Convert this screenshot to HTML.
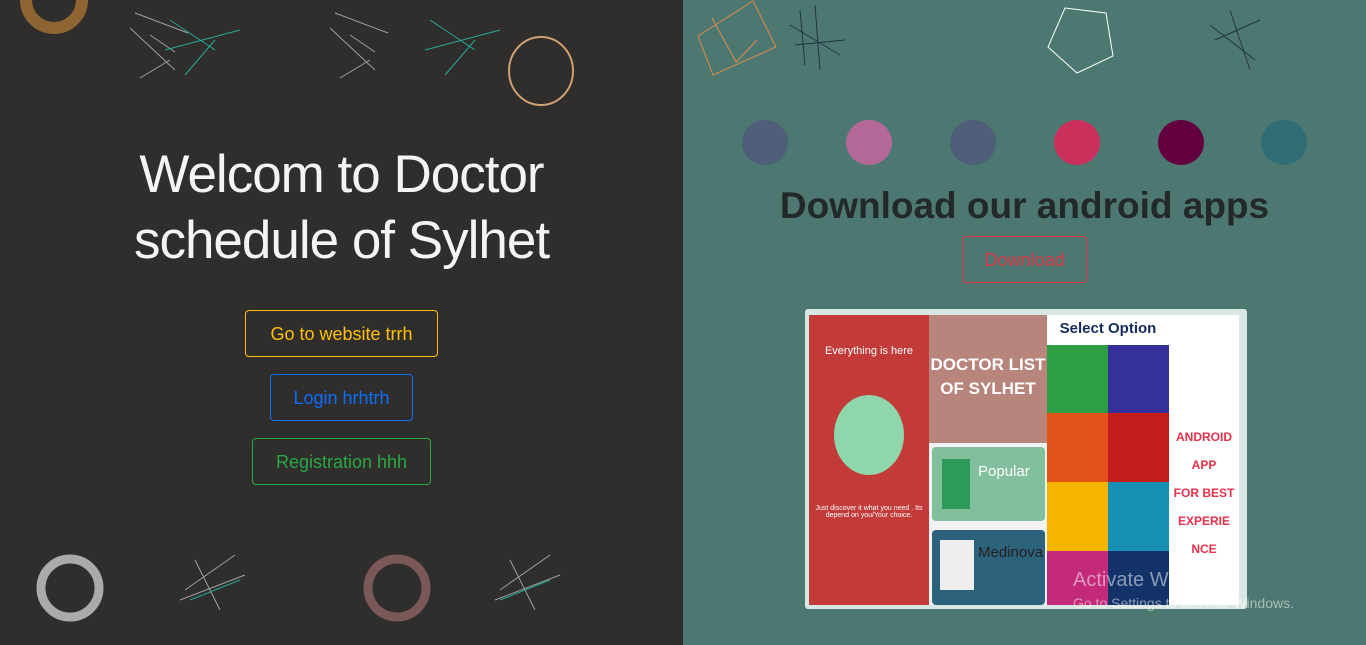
<!DOCTYPE html>
<html><head><meta charset="utf-8"><style>
*{margin:0;padding:0;box-sizing:border-box}
body{width:1366px;height:645px;overflow:hidden;font-family:"Liberation Sans",sans-serif;position:relative}
.l{position:absolute;left:0;top:0;width:683px;height:645px;background:#302d2d}
.r{position:absolute;left:683px;top:0;width:683px;height:645px;background:#4d7871}
.abs{position:absolute}
h1{position:absolute;left:0;width:683px;top:142px;text-align:center;color:#f4f4f4;font-weight:normal;font-size:53px;line-height:66px;letter-spacing:-1px}
.btn{position:absolute;border:1px solid;border-radius:4px;font-size:18px;text-align:center;line-height:46px;height:47px}
.dot{position:absolute;top:120px;width:46px;height:45px;border-radius:50%}
h2{position:absolute;left:683px;width:683px;top:185px;text-align:center;font-size:37px;color:#23282a;font-weight:bold;letter-spacing:0}
</style></head><body>
<div class="l"></div><div class="r"></div>
<svg class="abs" style="left:0;top:0" width="1366" height="645">
<circle cx="54" cy="0" r="28" fill="none" stroke="#8e6433" stroke-width="12"/>
<ellipse cx="541" cy="71" rx="32" ry="34" fill="none" stroke="#d0a070" stroke-width="2"/>
<g stroke="#bbb" stroke-width="1" opacity=".8">
<path d="M135 13 L188 33 M130 28 L175 70 M150 35 L175 52 M140 78 L170 60"/>
<path d="M335 13 L388 33 M330 28 L375 70 M350 35 L375 52 M340 78 L370 60"/>
<path d="M185 590 L235 555 M180 600 L245 575 M195 560 L220 610"/>
<path d="M500 590 L550 555 M495 600 L560 575 M510 560 L535 610"/>
</g>
<g stroke="#2a9" stroke-width="1">
<path d="M170 20 L215 50 M165 50 L240 30 M185 75 L215 40"/>
<path d="M430 20 L475 50 M425 50 L500 30 M445 75 L475 40"/>
<path d="M190 600 L240 580 M500 600 L550 580"/>
</g>
<circle cx="70" cy="588" r="29" fill="none" stroke="#aaa" stroke-width="9"/>
<circle cx="397" cy="588" r="29" fill="none" stroke="#7b5858" stroke-width="9"/>
<g fill="none" stroke="#e08a48" stroke-width="1"><path d="M698 36 L753 1 L776 47 L713 75 Z"/><path d="M712 18 L736 62 L757 40"/></g>
<g stroke="#234" stroke-width="1"><path d="M790 25 L840 55 M800 10 L805 65 M815 5 L820 70 M795 45 L845 40"/><path d="M1210 25 L1255 60 M1215 40 L1260 20 M1230 10 L1250 70"/></g>
<path d="M1065 8 L1106 13 L1113 56 L1077 73 L1048 47 Z" fill="none" stroke="#fff" stroke-width="1"/>
</svg>
<h1>Welcom to Doctor<br>schedule of Sylhet</h1>
<div class="btn" style="left:245px;top:310px;width:193px;color:#ffc107;border-color:#ffc107">Go to website trrh</div>
<div class="btn" style="left:270px;top:374px;width:143px;color:#0d6efd;border-color:#0d6efd">Login hrhtrh</div>
<div class="btn" style="left:252px;top:438px;width:179px;color:#28a745;border-color:#28a745">Registration hhh</div>
<div class="dot" style="left:742px;background:#4f5e79"></div>
<div class="dot" style="left:846px;background:#b46898"></div>
<div class="dot" style="left:950px;background:#4f5e79"></div>
<div class="dot" style="left:1054px;background:#cb2f5b"></div>
<div class="dot" style="left:1158px;background:#63003f"></div>
<div class="dot" style="left:1261px;background:#316d74"></div>
<h2>Download our android apps</h2>
<div class="btn" style="left:962px;top:236px;width:125px;color:#dc3545;border-color:#dc3545;font-size:18px">Download</div>
<div class="abs" style="left:805px;top:309px;width:442px;height:300px;background:#d8e6e4;border-radius:3px">
 <div class="abs" style="left:4px;top:6px;width:120px;height:290px;background:#c23b38;color:#fff;font-size:11px;text-align:center">
  <div style="margin-top:30px">Everything is here</div>
  <div style="width:70px;height:80px;border-radius:50%;background:#8fd6ac;margin:38px auto 0"></div>
  <div style="font-size:7px;margin-top:30px">Just discover it what you need . Its depend on you/Your choice.</div>
 </div>
 <div class="abs" style="left:124px;top:6px;width:118px;height:128px;background:#b7857c;color:#fff;font-weight:bold;font-size:17px;text-align:center;padding-top:38px;line-height:24px">DOCTOR LIST<br>OF SYLHET</div>
 <div class="abs" style="left:124px;top:134px;width:118px;height:162px;background:#f2f2f2"></div>
 <div class="abs" style="left:127px;top:138px;width:113px;height:74px;background:#82bf9c;border-radius:4px"><div class="abs" style="left:10px;top:12px;width:28px;height:50px;background:#2e9a5a"></div><div class="abs" style="left:46px;top:16px;color:#fff;font-size:15px">Popular</div></div>
 <div class="abs" style="left:127px;top:221px;width:113px;height:75px;background:#2d627c;border-radius:4px"><div class="abs" style="left:8px;top:10px;width:34px;height:50px;background:#eee"></div><div class="abs" style="left:46px;top:14px;color:#222;font-size:15px">Medinova</div></div>
 <div class="abs" style="left:242px;top:6px;width:122px;height:30px;background:#fff;color:#142a5e;font-weight:bold;font-size:15px;text-align:center;line-height:28px">Select Option</div>
 <div class="abs" style="left:242px;top:36px;width:61px;height:68px;background:#2e9e45"></div>
 <div class="abs" style="left:303px;top:36px;width:61px;height:68px;background:#35309a"></div>
 <div class="abs" style="left:242px;top:104px;width:61px;height:69px;background:#e2531a"></div>
 <div class="abs" style="left:303px;top:104px;width:61px;height:69px;background:#c51c1c"></div>
 <div class="abs" style="left:242px;top:173px;width:61px;height:69px;background:#f5b400"></div>
 <div class="abs" style="left:303px;top:173px;width:61px;height:69px;background:#1890b6"></div>
 <div class="abs" style="left:242px;top:242px;width:61px;height:54px;background:#c42a7a"></div>
 <div class="abs" style="left:303px;top:242px;width:61px;height:54px;background:#14326a"></div>
 <div class="abs" style="left:364px;top:6px;width:70px;height:290px;background:#fff;color:#e8304a;font-weight:bold;font-size:12px;text-align:center;line-height:28px;padding-top:108px">ANDROID<br>APP<br>FOR BEST<br>EXPERIE<br>NCE</div>
</div>
<div class="abs" style="left:1073px;top:569px;color:rgba(255,255,255,.5);font-size:20px">Activate Windows</div>
<div class="abs" style="left:1073px;top:595px;color:rgba(255,255,255,.5);font-size:14px">Go to Settings to activate Windows.</div>
</body></html>
